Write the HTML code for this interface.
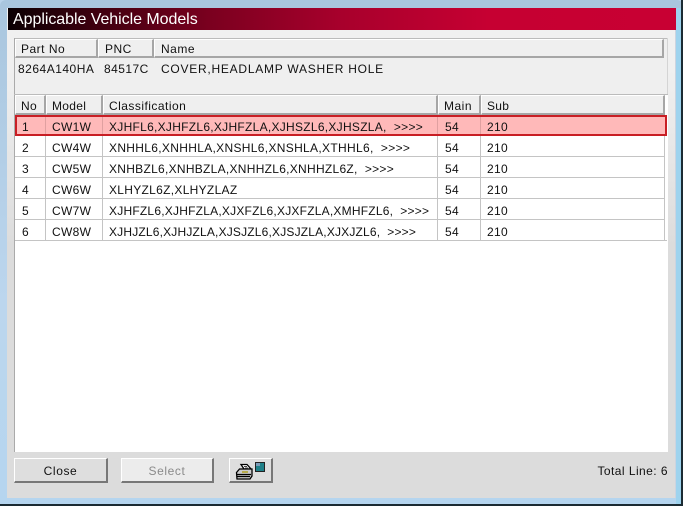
<!DOCTYPE html>
<html><head><meta charset="utf-8"><style>
html,body{margin:0;padding:0}
body{width:683px;height:506px;overflow:hidden;position:relative;background:#b9d3ea;font:12px "Liberation Sans",sans-serif;color:#111;letter-spacing:.3px}
div{position:absolute;box-sizing:border-box}
.t{white-space:nowrap;line-height:14px}
.h{background:#efefef;border-top:1px solid #fff;border-left:1px solid #fff;border-right:2px solid #a6a6a6;border-bottom:2px solid #a6a6a6}
.l{background:#c4c4c4}
.btn{background:#dedede;border-top:1px solid #fff;border-left:1px solid #fff;border-right:2px solid #777;border-bottom:2px solid #777;text-align:center;line-height:24px;height:25px;letter-spacing:.6px}
</style></head><body>
<div style="left:0;top:0;width:683px;height:506px;background:linear-gradient(#a9c6de,#bcd6ee 60%,#b5d5ef);border-radius:6px 6px 0 0"></div>
<div style="left:0;top:504px;width:683px;height:2px;background:#1b2b33"></div>
<div style="left:681px;top:0;width:2px;height:506px;background:#1b2b33"></div>
<div style="left:676px;top:8px;width:5px;height:496px;background:#9ed3ee"></div>
<div style="left:7px;top:8px;width:669px;height:490px;background:linear-gradient(#f0f0f0 0,#f0f0f0 60px,#dcdcdc 240px);border-right:1px solid #ccd4e0"></div>
<div style="left:8px;top:8px;width:668px;height:22px;background:linear-gradient(90deg,#0a0003 0,#3a000e 12%,#7a001f 30%,#a8002c 50%,#c60032 72%,#c80033 100%)"></div>
<div class="t" style="left:13px;top:10px;color:#fff;font-size:16px;line-height:19px;letter-spacing:-.05px">Applicable Vehicle Models</div>
<div style="left:14px;top:38px;width:654px;height:57px;background:#efefef"></div>
<div style="left:14px;top:38px;width:654px;height:1px;background:#bbb"></div>
<div style="left:14px;top:38px;width:1px;height:414px;background:#aaa"></div>
<div style="left:667px;top:38px;width:1px;height:57px;background:#d4d4d4"></div>

<div class="h" style="left:15px;top:39px;width:83px;height:19px"></div>
<div class="h" style="left:98px;top:39px;width:56px;height:19px"></div>
<div class="h" style="left:154px;top:39px;width:510px;height:19px"></div>
<div class="t" style="left:21px;top:42px;letter-spacing:.5px">Part No</div>
<div class="t" style="left:105px;top:42px;letter-spacing:.5px">PNC</div>
<div class="t" style="left:161px;top:42px;letter-spacing:.5px">Name</div>
<div class="t" style="left:18px;top:62px;letter-spacing:.5px">8264A140HA</div>
<div class="t" style="left:104px;top:62px;letter-spacing:.45px">84517C</div>
<div class="t" style="left:161px;top:62px;letter-spacing:.75px">COVER,HEADLAMP WASHER HOLE</div>

<div style="left:15px;top:95px;width:653px;height:357px;background:#fff"></div>
<div style="left:14px;top:94px;width:654px;height:1px;background:#bbb"></div>
<div class="h" style="left:15px;top:95px;width:31px;height:20px"></div>
<div class="h" style="left:46px;top:95px;width:57px;height:20px"></div>
<div class="h" style="left:103px;top:95px;width:335px;height:20px"></div>
<div class="h" style="left:438px;top:95px;width:43px;height:20px"></div>
<div class="h" style="left:481px;top:95px;width:184px;height:20px"></div>
<div class="t" style="left:21px;top:99px">No</div>
<div class="t" style="left:52px;top:99px">Model</div>
<div class="t" style="left:109px;top:99px;letter-spacing:.47px">Classification</div>
<div class="t" style="left:444px;top:99px;letter-spacing:.5px">Main</div>
<div class="t" style="left:487px;top:99px">Sub</div>

<div class="l" style="left:15px;top:156px;width:650px;height:1px"></div>
<div class="l" style="left:15px;top:177px;width:650px;height:1px"></div>
<div class="l" style="left:15px;top:198px;width:650px;height:1px"></div>
<div class="l" style="left:15px;top:219px;width:650px;height:1px"></div>
<div class="l" style="left:15px;top:240px;width:652px;height:1px"></div>
<div class="l" style="left:45px;top:136px;width:1px;height:104px"></div>
<div class="l" style="left:102px;top:136px;width:1px;height:104px"></div>
<div class="l" style="left:437px;top:136px;width:1px;height:104px"></div>
<div class="l" style="left:480px;top:136px;width:1px;height:104px"></div>
<div class="l" style="left:664px;top:115px;width:1px;height:125px"></div>

<div style="left:15px;top:115px;width:652px;height:21px;background:#ffb9b9;border:2px solid #c81e24"></div>
<div class="l" style="left:45px;top:117px;width:1px;height:17px;background:#e0a0a0"></div>
<div class="l" style="left:102px;top:117px;width:1px;height:17px;background:#e0a0a0"></div>
<div class="l" style="left:437px;top:117px;width:1px;height:17px;background:#e0a0a0"></div>
<div class="l" style="left:480px;top:117px;width:1px;height:17px;background:#e0a0a0"></div>

<div class="t" style="left:22px;top:120px">1</div><div class="t" style="left:52px;top:120px">CW1W</div><div class="t" style="left:109px;top:120px;letter-spacing:.28px">XJHFL6,XJHFZL6,XJHFZLA,XJHSZL6,XJHSZLA, &nbsp;&gt;&gt;&gt;&gt;</div><div class="t" style="left:445px;top:120px">54</div><div class="t" style="left:487px;top:120px">210</div>
<div class="t" style="left:22px;top:141px">2</div><div class="t" style="left:52px;top:141px">CW4W</div><div class="t" style="left:109px;top:141px;letter-spacing:.32px">XNHHL6,XNHHLA,XNSHL6,XNSHLA,XTHHL6, &nbsp;&gt;&gt;&gt;&gt;</div><div class="t" style="left:445px;top:141px">54</div><div class="t" style="left:487px;top:141px">210</div>
<div class="t" style="left:22px;top:162px">3</div><div class="t" style="left:52px;top:162px">CW5W</div><div class="t" style="left:109px;top:162px;letter-spacing:.28px">XNHBZL6,XNHBZLA,XNHHZL6,XNHHZL6Z, &nbsp;&gt;&gt;&gt;&gt;</div><div class="t" style="left:445px;top:162px">54</div><div class="t" style="left:487px;top:162px">210</div>
<div class="t" style="left:22px;top:183px">4</div><div class="t" style="left:52px;top:183px">CW6W</div><div class="t" style="left:109px;top:183px">XLHYZL6Z,XLHYZLAZ</div><div class="t" style="left:445px;top:183px">54</div><div class="t" style="left:487px;top:183px">210</div>
<div class="t" style="left:22px;top:204px">5</div><div class="t" style="left:52px;top:204px">CW7W</div><div class="t" style="left:109px;top:204px;letter-spacing:.22px">XJHFZL6,XJHFZLA,XJXFZL6,XJXFZLA,XMHFZL6, &nbsp;&gt;&gt;&gt;&gt;</div><div class="t" style="left:445px;top:204px">54</div><div class="t" style="left:487px;top:204px">210</div>
<div class="t" style="left:22px;top:225px">6</div><div class="t" style="left:52px;top:225px">CW8W</div><div class="t" style="left:109px;top:225px;letter-spacing:.18px">XJHJZL6,XJHJZLA,XJSJZL6,XJSJZLA,XJXJZL6, &nbsp;&gt;&gt;&gt;&gt;</div><div class="t" style="left:445px;top:225px">54</div><div class="t" style="left:487px;top:225px">210</div>

<div class="btn" style="left:14px;top:458px;width:94px">Close</div>
<div class="btn" style="left:121px;top:458px;width:93px;background:#ececec;color:#8a8a8a">Select</div>
<div class="btn" style="left:229px;top:458px;width:44px"></div>
<svg style="position:absolute;left:235px;top:461px" width="32" height="20" viewBox="0 0 32 20">
<rect x="20.500" y="1.500" width="9" height="9" fill="#1f8088" stroke="#222"/>
<rect x="21" y="2" width="4" height="3" fill="#7a9cb8"/>
<path d="M6 3.500h6l4 4.500h-7z" fill="#fff" stroke="#000" stroke-width="1.300"/>
<path d="M1.500 11.500l3-3.500h12.500v7l-2 3h-13z" fill="#ccc" stroke="#000" stroke-width="1.300"/>
<path d="M2 13.500h14M2 15.500h13" stroke="#000" stroke-width="1.200" fill="none"/>
<path d="M7 11h6" stroke="#b0a020" stroke-width="1.500"/>
<path d="M9 5.500h3M10 7h3" stroke="#444"/>
</svg>
<div class="t" style="right:15px;top:464px;letter-spacing:.45px">Total Line: 6</div>
</body></html>
